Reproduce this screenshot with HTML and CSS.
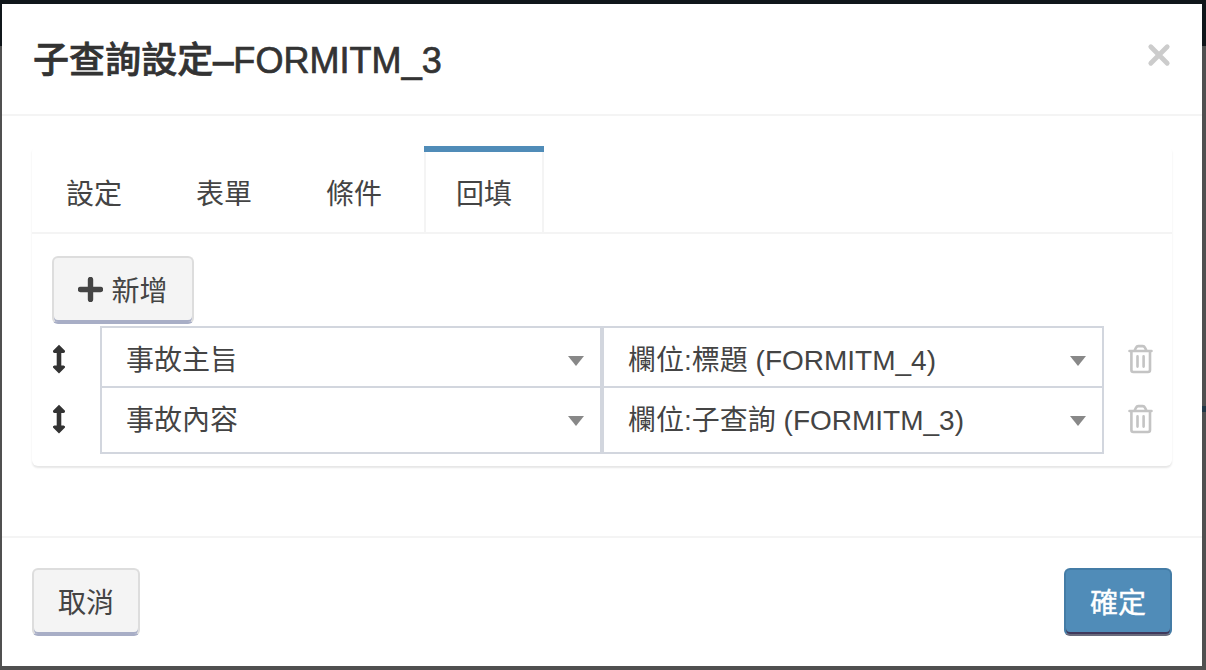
FILE: index.html
```html
<!DOCTYPE html>
<html lang="zh-Hant">
<head>
<meta charset="utf-8">
<title>子查詢設定</title>
<link rel="stylesheet" href="styles.css">
</head>
<body>
<svg class="defs" width="0" height="0">
  <symbol id="move" viewBox="0 0 14 30"><path d="M7 .8 13 6.8Q13.6 8.6 11.6 9H9.3V21.5H11.6Q13.6 21.9 13 23.5L7 29.5 1 23.5Q.4 21.9 2.4 21.5H4.7V9H2.4Q.4 8.6 1 6.8Z" fill="#333"/></symbol>
  <symbol id="trash" viewBox="0 0 26 30"><g fill="none" stroke="#c4c4c4" stroke-width="2.6" stroke-linecap="round" stroke-linejoin="round"><path d="M1.5 7H23.5M6.8 6 8.2 3.4Q8.8 2.1 10.2 2.1H14.8Q16.2 2.1 16.8 3.4L18.2 6M3.4 7V26Q3.4 28 5.4 28H20Q22 28 22 26V7M9.5 12.4V22.6M15.6 12.4V22.6"/></g></symbol>
</svg>
<div class="strip"></div>
<div class="modal">
  <header class="modal-header">
    <h1 class="title">子查詢設定<span class="dash">–</span>FORMITM_3</h1>
    <svg class="close" width="24" height="24" viewBox="0 0 24 24"><path d="M3.8 3.8 20.2 20.2M20.2 3.8 3.8 20.2" stroke="#ccc" stroke-width="4.8" stroke-linecap="round"/></svg>
  </header>
  <main class="modal-body">
    <section class="panel">
      <nav class="tabs">
        <a class="tab">設定</a><a class="tab">表單</a><a class="tab">條件</a><a class="tab active">回填</a>
      </nav>
      <div class="panel-body">
        <button class="btn add"><svg class="plus" width="25" height="25" viewBox="0 0 25 25"><path d="M12.5 2.5V22.5M2.5 12.5H22.5" stroke="#444" stroke-width="5.4" stroke-linecap="round"/></svg><span>新增</span></button>
        <div class="row">
          <svg class="move" width="14" height="30"><use href="#move"/></svg>
          <div class="select">事故主旨<i class="caret"></i></div>
          <div class="select">欄位:標題 (FORMITM_4)<i class="caret"></i></div>
          <svg class="trash" width="26" height="30"><use href="#trash"/></svg>
        </div>
        <div class="row last">
          <svg class="move" width="14" height="30"><use href="#move"/></svg>
          <div class="select">事故內容<i class="caret"></i></div>
          <div class="select">欄位:子查詢 (FORMITM_3)<i class="caret"></i></div>
          <svg class="trash" width="26" height="30"><use href="#trash"/></svg>
        </div>
      </div>
    </section>
  </main>
  <footer class="modal-footer">
    <button class="btn"><span>取消</span></button>
    <button class="btn primary"><span>確定</span></button>
  </footer>
</div>
</body>
</html>
```
FILE: styles.css
```css
* { box-sizing: border-box; }
body {
  margin: 0;
  height: 670px;
  padding: 4px 4px 4px 2px;
  overflow: hidden;
  background: linear-gradient(#10161a 46px, #505050 46px);
  font: 28px/40px "Liberation Sans", "Noto Sans CJK TC", sans-serif;
  color: #444;
}
.defs { position: absolute; }
.strip {
  position: absolute;
  right: 0;
  top: 406px;
  width: 4px;
  height: 6px;
  background: #213747;
}
.modal {
  display: flex;
  flex-direction: column;
  height: 662px;
  background: #fff;
}
.modal-header {
  display: flex;
  justify-content: space-between;
  height: 112px;
  padding: 31px 31px 0 31px;
  border-bottom: 2px solid #f4f4f4;
}
.title {
  margin: 0;
  font-size: 36px;
  font-weight: 500;
  line-height: 51px;
  letter-spacing: 0.05px;
  color: #333;
  -webkit-text-stroke: 0.7px #333;
}
.dash { -webkit-text-stroke-width: 1.4px; }
.close { margin-top: 8px; }
.modal-body { flex: 1; padding: 30px 30px 0; }
.panel {
  height: 320px;
  border-radius: 6px;
  box-shadow: 0 2px 2px rgba(0, 0, 0, 0.1);
}
.tabs {
  display: flex;
  gap: 10px;
  height: 88px;
  padding-left: 2px;
  border-bottom: 2px solid #f4f4f4;
}
.tab {
  width: 120px;
  padding-top: 29px;
  text-align: center;
}
.tab.active {
  padding-top: 0;
  border: 2px solid #f4f4f4;
  border-width: 0 2px;
}
.tab.active::before {
  content: "";
  display: block;
  height: 6px;
  margin: 0 -2px 23px;
  background: #508cb8;
}
.panel-body { padding: 22px 20px 0; }
.btn {
  display: flex;
  align-items: center;
  justify-content: center;
  gap: 8px;
  height: 68px;
  padding: 0 24px;
  border: 2px solid #ddd;
  border-radius: 6px;
  background: #f4f4f4;
  box-shadow: inset 0 -2px #a8aec6;
  border-bottom-color: #a8aec6;
  font: inherit;
  color: #444;
}
.btn span { padding-top: 3px; }
.add { width: 142px; }
.plus { margin-bottom: 2px; }
.btn.primary {
  border-color: #447ca6;
  border-bottom-color: #686a7c;
  background: #508cb8;
  box-shadow: inset 0 -2px #40395c;
  color: #fff;
  -webkit-text-stroke: 0.4px #fff;
}
.row {
  display: grid;
  grid-template-columns: 48px 502px 502px 48px;
  height: 60px;
  margin-top: 2px;
}
.row.last { height: 68px; margin-top: 0; }
.move { margin-top: 18px; }
.trash { margin: 18px 0 0 24px; }
.select {
  display: flex;
  justify-content: space-between;
  padding: 13px 16px 0 24px;
  border: 2px solid #d2d6de;
  border-bottom-width: 0;
}
.last .select { border-bottom-width: 2px; }
.caret {
  width: 16px;
  height: 10px;
  margin-top: 15px;
  background: #888;
  clip-path: polygon(0 0, 100% 0, 50% 100%);
}
.modal-footer {
  display: flex;
  justify-content: space-between;
  height: 130px;
  padding: 30px 30px 0;
  border-top: 2px solid #f4f4f4;
}
```
